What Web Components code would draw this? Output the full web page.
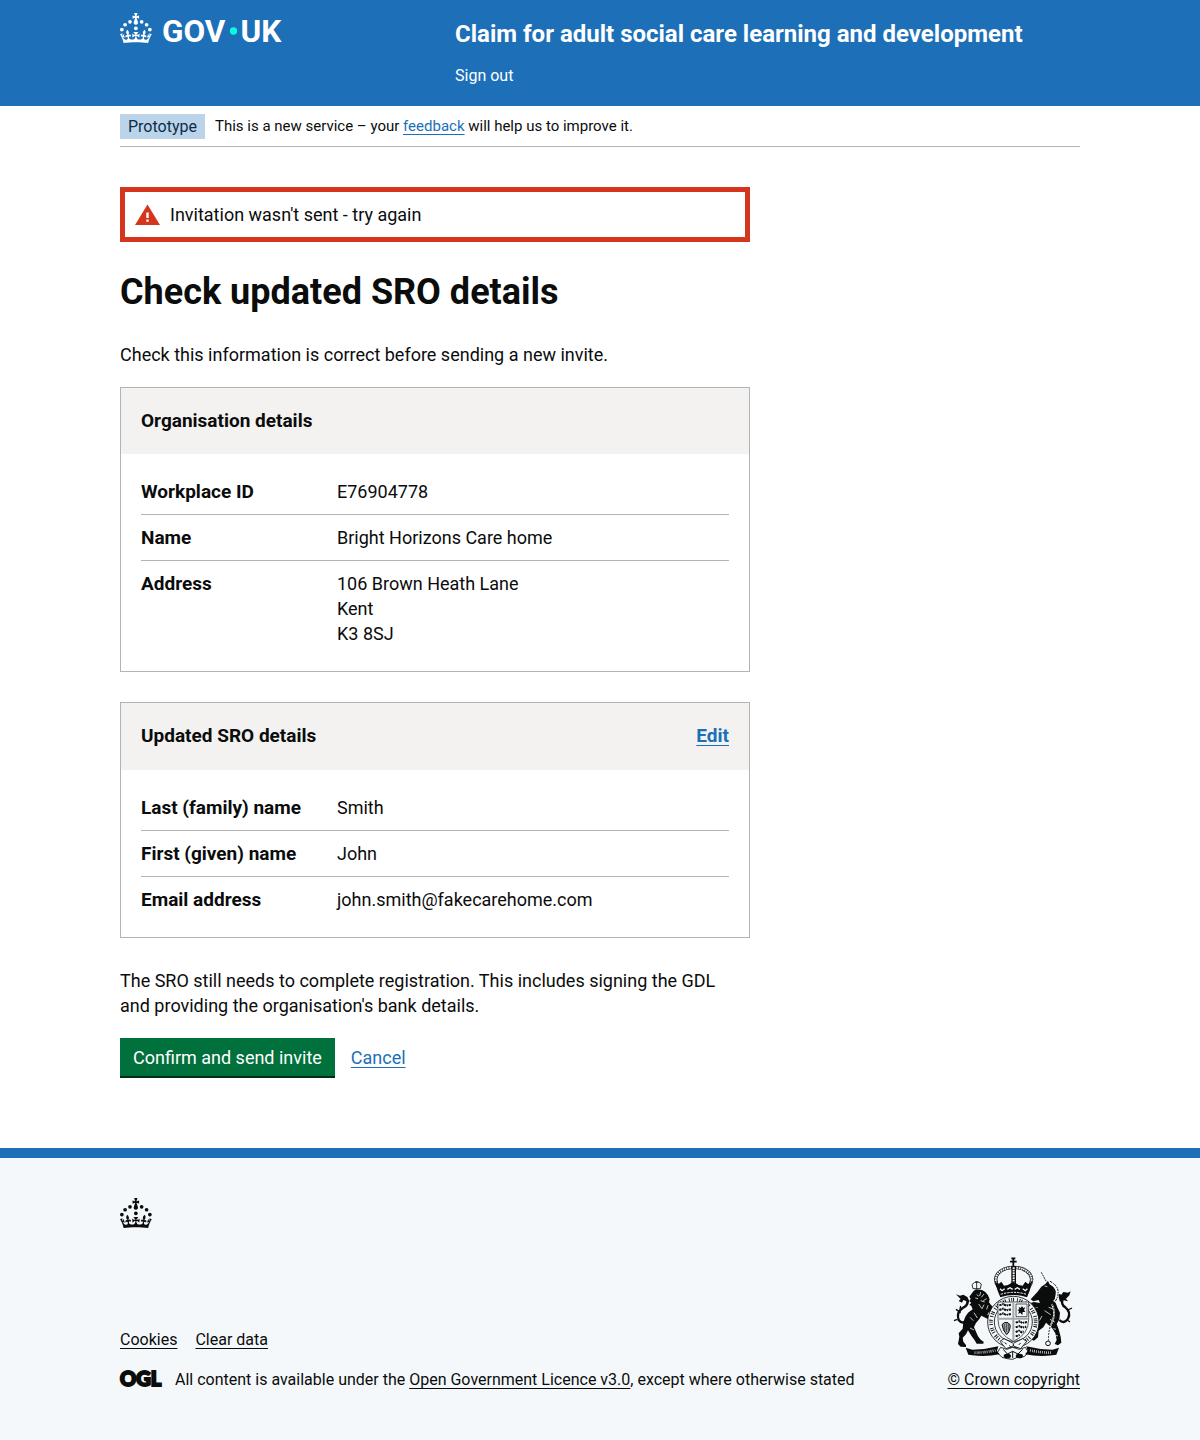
<!DOCTYPE html>
<html lang="en">
<head>
<meta charset="utf-8">
<meta name="viewport" content="width=device-width, initial-scale=1">
<title>Check updated SRO details</title>
<style>
body {
  --brand: #1d70b8;
  --text: #0b0c0c;
  --link: #1a70b8;
  --rule: #b1b4b6;
  --error: #d4351c;
  margin: 0;
  background: #f4f8fb;
  color: var(--text);
  font: 18px/25px Roboto, "Liberation Sans", sans-serif;
}
p { max-width: 620px; margin: 0 0 20px; }
h1 { margin: 30px 0; font-size: 36px; line-height: 40px; font-weight: 700; }
a { color: var(--link); text-underline-offset: 3px; text-decoration-thickness: 1px; }
</style>
</head>
<body>
<service-header name="Claim for adult social care learning and development">
  <a href="#sign-out">Sign out</a>
</service-header>
<page-body>
  <phase-banner slot="phase" tag="Prototype">This is a new service – your <a href="#feedback">feedback</a> will help us to improve it.</phase-banner>
  <error-banner>Invitation wasn't sent - try again</error-banner>
  <h1>Check updated SRO details</h1>
  <p>Check this information is correct before sending a new invite.</p>
  <summary-card heading="Organisation details">
    <summary-row key="Workplace ID">E76904778</summary-row>
    <summary-row key="Name">Bright Horizons Care home</summary-row>
    <summary-row key="Address">106 Brown Heath Lane<br>Kent<br>K3 8SJ</summary-row>
  </summary-card>
  <summary-card heading="Updated SRO details">
    <a slot="action" href="#edit">Edit</a>
    <summary-row key="Last (family) name">Smith</summary-row>
    <summary-row key="First (given) name">John</summary-row>
    <summary-row key="Email address">john.smith@fakecarehome.com</summary-row>
  </summary-card>
  <p>The SRO still needs to complete registration. This includes signing the GDL and providing the organisation's bank details.</p>
  <button-group>
    <action-button>Confirm and send invite</action-button>
    <a href="#cancel">Cancel</a>
  </button-group>
</page-body>
<service-footer>
  <a slot="links" href="#cookies">Cookies</a>
  <a slot="links" href="#clear">Clear data</a>
  <span slot="licence">All content is available under the <a href="#ogl">Open Government Licence v3.0</a>, except where otherwise stated</span>
</service-footer>

<template id="crown">
  <svg><g>
    <circle cx="20" cy="17.6" r="3.7"/><circle cx="10.2" cy="23.5" r="3.7"/><circle cx="3.7" cy="33.2" r="3.7"/>
    <circle cx="31.7" cy="30.6" r="3.7"/><circle cx="43.3" cy="17.6" r="3.7"/><circle cx="53.2" cy="23.5" r="3.7"/><circle cx="59.7" cy="33.2" r="3.7"/>
    <path d="M33.1,9.8c.2-.1.3-.3.5-.5l4.6,2.4v-6.8l-4.6,1.5c-.1-.2-.3-.3-.5-.5l1.9-5.9h-6.7l1.9,5.9c-.2.1-.3.3-.5.5l-4.6-1.5v6.8l4.6-2.4c.1.2.3.3.5.5l-2.6,8c-.9,2.8,1.2,5.7,4.1,5.7h0c3,0,5.1-2.9,4.1-5.7l-2.6-8ZM37,37.9s-3.4,3.8-4.1,6.1c2.2,0,4.2-.5,6.4-2.8l-.7,8.5c-2-2.8-4.4-4.1-5.7-3.8.1,3.1.5,6.7,5.8,7.2,3.7.3,6.7-1.5,7-3.8.4-2.6-2-4.3-3.7-1.6-1.4-4.5,2.4-6.1,4.9-3.2-1.9-4.5-1.8-7.7,2.4-10.9,3,4,2.6,7.3-1.2,11.1,2.4-1.3,6.2,0,4,4.6-1.2-2.8-3.7-2.2-4.2.2-.3,1.7.7,3.7,3,4.2,1.9.3,4.7-.9,7-5.9-1.3,0-2.4.7-3.9,1.7l2.4-8c.6,2.3,1.4,3.7,2.2,4.5.6-1.6.5-2.8,0-5.3l5,1.8c-2.6,3.6-5.2,8.7-7.3,17.5-7.4-1.1-15.7-1.7-24.5-1.7h0c-8.8,0-17.1.6-24.5,1.7-2.1-8.9-4.7-13.9-7.3-17.5l5-1.8c-.5,2.5-.6,3.7,0,5.3.8-.8,1.6-2.3,2.2-4.5l2.4,8c-1.5-1-2.6-1.7-3.9-1.7,2.3,5,5.2,6.2,7,5.9,2.3-.4,3.3-2.4,3-4.2-.5-2.4-3-3.1-4.2-.2-2.2-4.6,1.6-6,4-4.6-3.7-3.7-4.2-7.1-1.2-11.1,4.2,3.2,4.3,6.4,2.4,10.9,2.5-2.8,6.3-1.3,4.9,3.2-1.8-2.7-4.1-1-3.7,1.6.3,2.3,3.3,4.1,7,3.8,5.4-.5,5.7-4.2,5.8-7.2-1.3-.2-3.7,1-5.7,3.8l-.7-8.5c2.2,2.3,4.2,2.7,6.4,2.8-.7-2.3-4.1-6.1-4.1-6.1h10.6,0Z"/>
  </g></svg>
</template>

<template id="crest">
  <svg viewBox="3 12 375 306" width="125" height="102" fill="none" stroke="#0b0c0c" stroke-width="3" aria-hidden="true">
    <!-- lion -->
    <g fill="#0b0c0c" stroke="none">
      <path d="M70 112l8-6 18 2 10 6 8 10 5 12-2 9 6 8 8 8 14 8 4 8-5 6-14-4-14-4-4 8 14 4 8 6-2 8-12-3-14-7-12-6-6 10-10 12-6 12 6 14 6 14 8 10 9 6-1 6-20 0-6-10-10-14-10-16-6 12-10 10 2 12 8 10 0 6-16-1-8-8 4-22-2-10 12-14 2-20 6-16 8-12 14-10-4-10-6-4 6-6-6-4 4-8-4-6z"/>
      <path d="M18 121l12 4 10-3 12 7 6 12-4 9-6-9-8-3-4 8-10-5 6-6z"/>
    </g>
    <path d="M52 142q2 12-14 20q-20 14-12 36q12 16 28-2" stroke-width="7"/>
    <path d="M32 176l-14-10M22 196l-10 4M30 166l2-10" stroke-width="4"/>
    <path d="M69 104l-3-12q14-16 28-2l-3 14zM80 82v22M75 84h10" stroke-width="2.500"/>
    <path d="M80 122l6 4M76 132l8 2M92 114l-3 12M102 120l-8 10M110 134l-10 6M92 140l12 4M86 150l10 14M102 152l-6 12M114 154l-4 12M72 176l10 16M60 190l10 10M60 222l12 6M78 208l8 2M126 168l12 6M118 186l10 4" stroke="#f4f8fb" stroke-width="2.300"/>
    <!-- unicorn -->
    <path d="M274 55l15 28" stroke-width="2.600" stroke-dasharray="6 2"/>
    <g fill="#0b0c0c" stroke="none">
      <path d="M262 114l12-16 12-8 8-10 4 10 12 8 8 12 2 16-4 18 6 16 8 16-2 20-8 14 6 16 6 22 2 18-10 8-10-4 6-12-4-20-10-16-18-16-8 14-14 10-2 20-12 10-10-4 10-14 6-20 10-14-20-4-12-10-8-16-16-8-2-10 14-4 20 2 18 4 8-14-4-10-16 4-8-6z"/>
      <path d="M232 150l20-6 22 4 8 10-20 2-18 4-14-4z"/>
      <path d="M326 130l-4-12 12 4 6-8 14 2 8-4-4 12-10 10 6 8-16-4-8 6z"/>
    </g>
    <path d="M338 136q-6 16 8 24q18 14 8 34q-12 18-26 4" stroke-width="7"/>
    <path d="M354 168l12-6M352 198l8 6" stroke-width="4"/>
    <path d="M302 86q24 12 20 34q0 12-8 24" stroke="#f4f8fb" stroke-width="10"/>
    <path d="M300 82q28 14 24 40q-2 12-10 22M300 94q16 12 12 44" stroke-width="3" stroke-dasharray="7 3 4 2"/>
    <path d="M284 96l8 2M296 160l16 6M284 170l18 12M300 196l14 8M310 224l8 2M316 244l8 2M276 186l-8 14" stroke="#f4f8fb" stroke-width="2.300"/>
    <path d="M306 150q14 34-4 64q-8 22-6 46" stroke="#f4f8fb" stroke-width="5"/>
    <path d="M306 150q14 34-4 64q-8 22-6 46" stroke-width="2.500" stroke-dasharray="6 3"/>
    <circle cx="294" cy="268" r="7"/>
    <!-- royal crown -->
    <path d="M190 12v26M180 23h20M184 13h12" stroke-width="5.500"/>
    <path d="M146 100c-22-30 0-56 40-60M236 100c22-30 0-56-40-60" stroke-width="10"/>
    <path d="M146 100c-22-30 0-56 40-60M236 100c22-30 0-56-40-60" stroke="#f4f8fb" stroke-width="6" stroke-dasharray="5 2"/>
    <path d="M191 36v60" stroke-width="14"/><path d="M191 40v52" stroke="#f4f8fb" stroke-width="6" stroke-dasharray="5 2.500"/>
    <path d="M134 82l12 8 8-7 8 12 12-2 16-10 16 10 12 2 8-12 8 7 13-8-8 28-8 20q-40-14-80 0l-8-20z" fill="#0b0c0c" stroke="none"/>
    <path d="M150 104l6 6 8-6M172 106l8-5 8 5M194 106l8-5 8 5M218 104l8 6 6-6" stroke="#f4f8fb" stroke-width="4"/>
    <path d="M152 121q39-12 78 0" stroke="#f4f8fb" stroke-width="3" stroke-dasharray="7 3"/>
    <!-- garter -->
    <ellipse cx="190" cy="204" rx="77" ry="77" stroke-width="2.500" fill="#f4f8fb"/>
    <ellipse cx="190" cy="204" rx="67" ry="67" stroke-width="11" stroke-dasharray="2.500 5 2.500 3 3 9"/>
    <ellipse cx="190" cy="204" rx="57" ry="58" stroke-width="2.500" fill="#f4f8fb"/>
    <!-- shield -->
    <path d="M144 144h92v52q0 46-46 66q-46-20-46-66z" fill="#f4f8fb" stroke-width="2"/>
    <path d="M190 145v115M145 194h90" stroke="#a4a8ab" stroke-width="6"/>
    <path d="M148 154l12-4 8 5 16-3M148 168l12-4 8 5 16-3M148 182l12-4 8 5 16-3M197 206l12-4 8 5 14-3M197 220l12-4 8 5 12-3M197 234l10-4 8 5 6-3M197 247l12-4" stroke-width="6" stroke-dasharray="7 2 4 2"/>
    <path d="M198 150h33v38h-33z" stroke-width="2"/>
    <path d="M206 158l6 4 4-6 4 6 6-2-4 8 4 6-8 0-1 10-6-8-6 4 2-9-5-3 6-2z" fill="#0b0c0c" stroke="none"/>
    <path d="M156 212q6-10 18-6q10 6 6 16q-2 14-10 20q-12-14-14-30z" fill="#a4a8ab" stroke-width="3"/>
    <path d="M163 210v20M169 208v26M175 210v20" stroke-width="1.800"/>
    <!-- garter buckle and base -->
    <path d="M150 262l12-8 28 14 28-14 12 8-18 22-22-8-22 8z" fill="#f4f8fb" stroke-width="2.500"/>
    <path d="M164 266l6 4M178 274l4 4M206 272l6-4M190 270v6M156 262l3 3" stroke-width="3"/>
    <path d="M142 296l10-16 18 6 18-6 20 6 18-6 10 16-14 12-20 2-14 6-16-2-16-4z" fill="#f4f8fb" stroke-width="2.500"/>
    <path d="M160 286l12 14 16-8 16 8 14-14M188 292v20" stroke-width="3"/>
    <ellipse cx="172" cy="306" rx="11" ry="7" fill="#0b0c0c" stroke="none"/><ellipse cx="208" cy="306" rx="11" ry="7" fill="#0b0c0c" stroke="none"/>
    <!-- motto scroll -->
    <path d="M47 281l20 6q40 0 78-10l-4 14 8 10q-40 8-82 3l-12-2zM327 281l-20 6q-40 0-78-10l4 14-8 10q40 8 82 3l12-2z" fill="#0b0c0c" stroke="none"/>
    <path d="M74 296q30 0 62-7M240 289q32 7 64 7" stroke="#f4f8fb" stroke-width="8" stroke-dasharray="2 4.500 1.800 3.500 2.400 4"/>
  </svg>
</template>

<script>
const crown = document.getElementById('crown').content.querySelector('g').outerHTML;
const crest = document.getElementById('crest').innerHTML;

const define = (name, render) => customElements.define(name, class extends HTMLElement {
  connectedCallback() {
    if (this.shadowRoot) return;
    this.attachShadow({ mode: 'open' }).innerHTML = render(this);
  }
});

const container = '.container { max-width: 960px; margin: 0 auto; }';

define('service-header', el => `
  <style>
    :host { --link: #fff; display: block; background: var(--brand); color: #fff; }
    ${container}
    .container { display: grid; grid-template-columns: 1fr 2fr; padding: 13px 0 19px; }
    .logo { display: block; color: #fff; }
    svg { display: block; fill: currentColor; overflow: visible; }
    svg text { font: 700 63px Roboto, "Liberation Sans", sans-serif; }
    .service { padding-left: 15px; }
    .name { display: block; margin: 6px 0 15px; font-size: 24px; line-height: 30px; font-weight: 700; color: #fff; text-decoration: none; }
    nav { font-size: 16px; line-height: 23px; }
    ::slotted(a) { text-decoration: none; }
  </style>
  <header class="container">
    <a class="logo" href="#home" aria-label="GOV.UK">
      <svg viewBox="0 0 324 60" width="162" height="30">${crown}
        <text x="84" y="58">GOV</text><circle cx="227" cy="36" r="7.300" fill="#00ffe0"/><text x="241" y="58">UK</text>
      </svg>
    </a>
    <div class="service">
      <a class="name" href="#service">${el.getAttribute('name')}</a>
      <nav><slot></slot></nav>
    </div>
  </header>`);

define('page-body', () => `
  <style>
    :host { display: block; background: #fff; }
    ${container}
    main { padding: 40px 0 70px; }
    .column { max-width: 630px; }
    @media (max-width: 990px) { .container { margin: 0 15px; } }
  </style>
  <div class="container">
    <slot name="phase"></slot>
    <main><div class="column"><slot></slot></div></main>
  </div>`);

define('phase-banner', el => `
  <style>
    :host { display: flex; align-items: center; gap: 10px; padding: 8px 0 7px; border-bottom: 1px solid var(--rule); font-size: 15px; line-height: 25px; }
    strong { padding: 0 8px; background: #bbd4ea; color: #0c2d4a; font-weight: 400; font-size: 16px; }
  </style>
  <strong>${el.getAttribute('tag')}</strong><span><slot></slot></span>`);

define('error-banner', () => `
  <style>
    :host { display: flex; align-items: center; gap: 10px; padding: 10px; border: 5px solid var(--error); }
    svg { display: block; flex: none; }
  </style>
  <svg viewBox="0 0 25 25" width="25" height="25" aria-hidden="true">
    <path d="M12.500 2.500L25 23H0z" fill="#d4351c"/>
    <path d="M11.300 10.500h2.400v5.500h-2.400zM11.300 17.500h2.400v2.300h-2.400z" fill="#fff"/>
  </svg>
  <span role="alert"><slot></slot></span>`);

define('summary-card', el => `
  <style>
    :host { display: block; margin-bottom: 30px; border: 1px solid var(--rule); }
    .title { display: flex; justify-content: space-between; padding: 20px 20px 21px; background: #f3f2f1; font-size: 19px; font-weight: 700; }
    h2 { margin: 0; font-size: inherit; }
    ::slotted(a) { line-height: 26px; }
    .rows { margin: 0; padding: 15px 20px; }
  </style>
  <div class="title"><h2>${el.getAttribute('heading')}</h2><slot name="action"></slot></div>
  <div class="rows"><slot></slot></div>`);

define('summary-row', el => `
  <style>
    :host { display: block; border-bottom: 1px solid var(--rule); }
    :host(:last-of-type) { border-bottom: 0; }
    dl { display: grid; grid-template-columns: 1fr 2fr; margin: 0; padding: 10px 0; }
    dt { font-size: 19px; font-weight: 700; }
    dd { margin: 0; }
  </style>
  <dl><dt>${el.getAttribute('key')}</dt><dd><slot></slot></dd></dl>`);

define('button-group', () => `
  <style>:host { display: flex; flex-wrap: wrap; align-items: baseline; gap: 16px; }</style><slot></slot>`);

define('action-button', () => `
  <style>
    :host { display: block; }
    button { display: block; padding: 7px 13px 6px; border: 0; border-bottom: 2px solid #002d18; background: #00703c; color: #fff; font: inherit; cursor: pointer; }
  </style>
  <button type="submit"><slot></slot></button>`);

define('service-footer', () => `
  <style>
    :host { --link: var(--text); display: block; border-top: 10px solid var(--brand); background: #f4f8fb; font-size: 16px; line-height: 20px; }
    ${container}
    footer { padding: 40px 0 50px; }
    svg { display: block; overflow: visible; }
    .row { display: flex; align-items: flex-end; justify-content: space-between; gap: 30px; margin-top: 30px; }
    .links { display: flex; gap: 18px; margin-bottom: 20px; }
    .licence { display: flex; align-items: center; gap: 14px; }
    .copyright { display: grid; justify-items: center; gap: 10px; color: var(--text); text-underline-offset: 3px; text-decoration-thickness: 1px; }
    .ogl text { font: 900 20px Lato, "Liberation Sans", sans-serif; stroke: currentColor; stroke-width: 2; }
  </style>
  <footer class="container">
    <svg viewBox="0 0 64 60" width="32" height="30" fill="#0b0c0c" aria-hidden="true">${crown}</svg>
    <div class="row">
      <div>
        <div class="links"><slot name="links"></slot></div>
        <div class="licence">
          <svg class="ogl" viewBox="0 0 41 18" width="41" height="18" fill="currentColor"><text x="0" y="15">OGL</text></svg>
          <slot name="licence"></slot>
        </div>
      </div>
      <a class="copyright" href="#copyright">${crest}<span>© Crown copyright</span></a>
    </div>
  </footer>`);
</script>
</body>
</html>
